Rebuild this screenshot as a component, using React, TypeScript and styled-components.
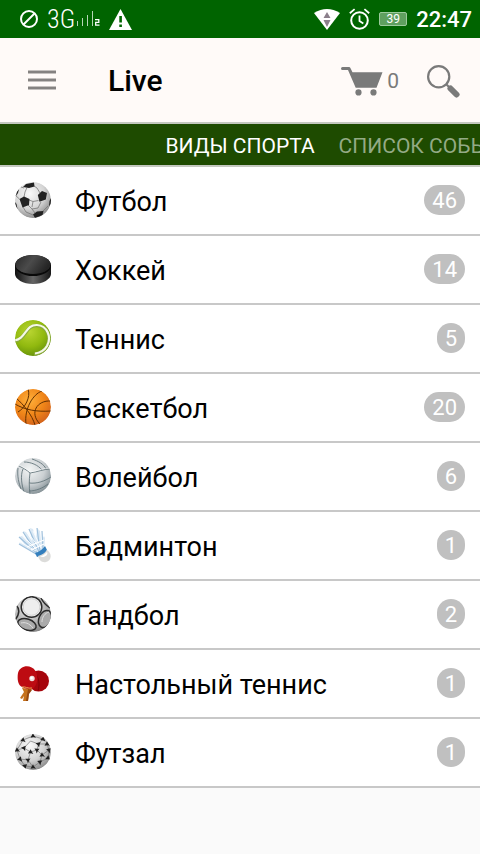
import React from 'react';
import styled, { createGlobalStyle } from 'styled-components';

const GlobalStyle = createGlobalStyle`
  * { box-sizing: border-box; }
  html, body { margin: 0; min-height: 100%; background: #fafafa; }
  body { font-family: Roboto, "Noto Sans", sans-serif; color: #000; }
  button { border: 0; padding: 0; background: none; color: inherit; font: inherit; cursor: pointer; }
  svg { display: block; flex: none; }
`;

const StatusBar = styled.div`
  display: flex;
  justify-content: space-between;
  height: 38px;
  padding: 0 8px 0 20px;
  background: #006400;
  color: #fff;
`;

const StatusGroup = styled.div<{ $gap: number }>`
  display: flex;
  align-items: center;
  gap: ${(p) => p.$gap}px;
`;

const Network = styled.span`
  display: flex;
  align-items: center;
  font-family: "Roboto Condensed", Roboto, sans-serif;
  font-size: 26px;
  font-weight: 300;
  line-height: 36px;
`;

const Battery = styled.span`
  width: 28px;
  height: 14px;
  border: 1px solid #9cca9c;
  border-radius: 2px;
  background: #5fa05f;
  font-size: 12px;
  line-height: 12px;
  text-align: center;
`;

const Clock = styled.time`
  font-size: 22px;
  line-height: 36px;
  padding-top: 2px;
  font-weight: 500;
`;

const Header = styled.header`
  display: flex;
  align-items: center;
  height: 86px;
  padding: 2px 20px 0 28px;
  border-bottom: 2px solid #c4c8c0;
  background: #fffaf8;
`;

const Title = styled.h1`
  flex: 1;
  margin: 0 0 0 52px;
  font-size: 30px;
  line-height: 36px;
  font-weight: 500;
`;

const CartButton = styled.button`
  display: flex;
  align-items: center;
  gap: 4px;
  margin-right: 28px;
  color: #7a7a7a;
  font-size: 21px;
  line-height: 28px;
`;

const Tabs = styled.nav`
  display: grid;
  grid-template-columns: 1fr auto 1fr;
  column-gap: 24px;
  height: 43px;
  overflow: hidden;
  border-bottom: 2px solid #c4c8c0;
  background: #1e4b00;
`;

const Tab = styled.button<{ $active?: boolean }>`
  grid-column: ${(p) => (p.$active ? 2 : 3)};
  min-width: 0;
  padding-top: 3px;
  color: ${(p) => (p.$active ? '#fff' : '#93aa85')};
  font-size: 21px;
  line-height: 36px;
  text-align: left;
  white-space: nowrap;
`;

const List = styled.ul`
  margin: 0;
  padding: 0;
  list-style: none;
`;

const Item = styled.li`
  border-bottom: 2px solid #c8c8c8;
  background: #fff;
`;

const SportRow = styled.button`
  display: flex;
  align-items: center;
  width: 100%;
  height: 67px;
  padding: 0 15px 2px;
  text-align: left;
`;

const SportName = styled.span`
  flex: 1;
  margin-left: 24px;
  padding-top: 4px;
  font-size: 27px;
  line-height: 32px;
`;

const Count = styled.span`
  min-width: 28px;
  height: 30px;
  padding: 1px 8px 0;
  border-radius: 15px;
  background: #c0c0c0;
  color: #fff;
  font-size: 22px;
  line-height: 30px;
  text-align: center;
`;

const BlockedIcon = () => (
  <svg width="18" height="18" viewBox="0 0 18 18" fill="none" stroke="#fff" strokeWidth="2">
    <circle cx="9" cy="9" r="8" />
    <path d="M3.5 14.5l11-11" />
  </svg>
);

const SignalIcon = () => (
  <svg width="25" height="16" viewBox="0 0 25 16">
    <path d="M2.500 10v5M7.500 7v8M12.500 4v11M17.500 0v15" stroke="#b5d5b5" fill="none" />
    <path d="M20 8.700h3.800v2.600H20.700v2.900h3.800" stroke="#fff" strokeWidth="1.300" fill="none" />
  </svg>
);

const WarningIcon = () => (
  <svg width="23" height="21" viewBox="0 0 23 21">
    <path d="M11.5 0L23 21H0z" fill="#fff" />
    <path d="M10.3 7h2.6v6.500h-2.600zM10.300 15.500h2.600v2.600h-2.600z" fill="#006400" />
  </svg>
);

const WifiIcon = () => (
  <svg width="26" height="21" viewBox="0 0 26 21">
    <path d="M0 4Q13-4 26 4L13 21z" fill="#fff" />
    <path d="M13 3l3.500 6h-7zM9.500 11h7L13 18z" fill="#8b7f8b" />
  </svg>
);

const AlarmIcon = () => (
  <svg width="21" height="22" viewBox="0 0 21 22" fill="none" stroke="#fff" strokeWidth="2">
    <circle cx="10.500" cy="12.500" r="8.300" />
    <path d="M10.500 7.500v5.500l3.800 2.500M.8 5.200L5.600 1.100M20.200 5.200L15.400 1.100" strokeWidth="1.800" />
  </svg>
);

const MenuIcon = () => (
  <svg width="28" height="22" viewBox="0 0 28 22">
    <path d="M0 0h28v4H0zM0 8h28v4H0zM0 16h28v4H0z" fill="#c4c0be" />
    <path d="M0 1h28v2H0zM0 9h28v2H0zM0 17h28v2H0z" fill="#858281" />
  </svg>
);

const CartIcon = () => (
  <svg width="42" height="29" viewBox="0 0 42 29" fill="#7a7a7a">
    <path d="M0 1.500Q0 0 1.500 0H8q1 0 1.400 1L11.500 5.300H41.500L35.500 20.800H14.700L7 3H1.500Q0 3 0 1.500z" />
    <circle cx="17.500" cy="25.400" r="3.100" />
    <circle cx="32.500" cy="25.400" r="3.100" />
  </svg>
);

const SearchIcon = () => (
  <svg width="33" height="33" viewBox="0 0 33 33" fill="none" stroke="#7a7a7a">
    <circle cx="11.700" cy="11.700" r="10.600" strokeWidth="2.200" />
    <path d="M19 19l4 4" strokeWidth="2.200" />
    <path d="M23.500 23.500l6 6" strokeWidth="6" strokeLinecap="round" />
  </svg>
);

const Icon = ({ children }: { children: React.ReactNode }) => (
  <svg width="36" height="36" viewBox="0 0 36 36" aria-hidden="true">{children}</svg>
);

const Ball = ({ id, stops, children }: { id: string; stops: string[]; children: React.ReactNode }) => (
  <Icon>
    <defs>
      <radialGradient id={id} cx=".4" cy=".32" r=".7">
        <stop offset="0" stopColor={stops[0]} />
        <stop offset=".6" stopColor={stops[1]} />
        <stop offset="1" stopColor={stops[2]} />
      </radialGradient>
      <clipPath id={`${id}-clip`}><circle cx="18" cy="18" r="18" /></clipPath>
    </defs>
    <g clipPath={`url(#${id}-clip)`}>
      <circle cx="18" cy="18" r="18" fill={`url(#${id})`} />
      {children}
    </g>
  </Icon>
);

const Football = () => (
  <Ball id="football" stops={['#fafafa', '#d5d5d5', '#8c8c8c']}>
    <path d="M12 5.500L10 10l-1 5M19 4l3 2 3 5M14 18l4 1.500 5.500-1M18 19.500L17 25M13 23l4 4 6-1L26 20M17 27l3 4M8 25l3 5 7 3M0 13l4.500 4M6 5l3 1M27 30l6-6" fill="none" stroke="#777" strokeWidth=".8" />
    <path d="M8 5l3-3 8-1.500.5 4-5.500 1.500zM4.500 17L9 14.500l5.500 2.500-.5 6-6.500 2.500zM22.800 13L27 9l5 2-1.200 6.500-6.300 2.300zM18 32.500l4-3 6.500-.5-1 4-7.500 3zM1.500 10L4 7l-1 4-2 3zM34.500 19L36 16v6l-2 2zM0 20l1.500 2 1 5-3-4z" fill="#222" />
  </Ball>
);

const Puck = () => (
  <Icon>
    <defs>
      <linearGradient id="puck-side">
        <stop stopColor="#111" /><stop offset=".5" stopColor="#666" /><stop offset="1" stopColor="#171717" />
      </linearGradient>
      <linearGradient id="puck-top" x1="0" y1="0" x2="1" y2=".4">
        <stop stopColor="#282828" /><stop offset=".5" stopColor="#4b4b4b" /><stop offset="1" stopColor="#252525" />
      </linearGradient>
    </defs>
    <path d="M0 14v9c0 5 8 10 18 10s18-5 18-10v-9z" fill="url(#puck-side)" />
    <ellipse cx="18" cy="14.500" rx="18" ry="10.500" fill="#090909" />
    <ellipse cx="18" cy="13.500" rx="17.500" ry="9.500" fill="url(#puck-top)" />
  </Icon>
);

const TennisBall = () => (
  <Ball id="tennis" stops={['#b9d531', '#91b90f', '#67930a']}>
    <path d="M-1 21C11 20 10 5 22 5.500c10 .5 15 12 10 21-3 5-9 7.500-13 8" fill="none" stroke="#88a83c" strokeWidth="3.600" />
    <path d="M-1 20.500C11 19.500 10 4.500 22 5c10 .5 15 12 10 21-3 5-8 7-12 7.500" fill="none" stroke="#f5f8e7" strokeWidth="2.200" />
  </Ball>
);

const Basketball = () => (
  <Ball id="basketball" stops={['#ffb03a', '#ef8418', '#d4641c']}>
    <path d="M13 0c3 8-3 19-10 23M27 2C18 5 9 20 11 35M36 12c-14-1-22 12-11 23M0 15c10 6 22 8 36 7M1 9c8 7 16 17 19 27" fill="none" stroke="#633000" strokeWidth="1" />
  </Ball>
);

const Volleyball = () => (
  <Ball id="volleyball" stops={['#f3f5f5', '#cbd0d3', '#879398']}>
    <path d="M4 8c4 2 8 4 11 7 7-1 14-4 20-4M15 15c-1 7-1 14 0 21M9 4c7 0 14 3 18 8M17 1c6 2 12 5 14 10M3 10c-1 8 1 16 3 21M8 11c-3 7-1 17 1 23M14 25c8 1 16-2 22-6M14 33c7 0 14-3 19-7" fill="none" stroke="#64767c" strokeWidth=".9" />
    <path d="M4 7c4 2 8 4 11 7 7-1 14-4 20-4" fill="none" stroke="#fff" strokeWidth=".6" />
  </Ball>
);

const Shuttlecock = () => (
  <Icon>
    <path d="M21 27L4 17l1-2 5 3-6-8 3-1 6 6-5-11 3 1 6 9-2-13 3 1 3 10 1-11 3 3 1 10 3-5 1 2-1 13z" fill="#dbe9f5" />
    <path d="M21 27L4 17M23 27L4 10M22 26L8 5M24 25L14 2M25 24L22 1M28 22L27 4" fill="none" stroke="#9fc0dc" strokeWidth="1.200" />
    <path d="M5 15l16 9M7 8l14 14M12 5l12 15M18 4l8 17" fill="none" stroke="#f8fcff" />
    <path d="M12 20l17-7M16 23l13-6" fill="none" stroke="#fff" strokeWidth="1.200" />
    <path d="M20 26c4-1 8-4 10-7l2 4c-2 4-6 6-10 7z" fill="#347fbd" />
    <path d="M23 29c4-1 7-3 9-6 6 4 4 11-1 12-4 1-7-2-8-6z" fill="#dcdcda" />
    <path d="M25 29c3 0 5-2 7-4 2 3-4 7-7 4z" fill="#fff" />
  </Icon>
);

const Handball = () => (
  <Ball id="handball" stops={['#eee', '#b8b8b8', '#858585']}>
    <g fill="#aaa" stroke="#2b2b2b" strokeWidth="1.500">
      <circle cx="16.500" cy="11" r="10.300" fill="#eee" />
      <ellipse cx="12" cy="28.500" rx="9.500" ry="5.500" transform="rotate(18 12 28.500)" />
      <ellipse cx="30" cy="23" rx="6" ry="9" transform="rotate(24 30 23)" />
      <path d="M1 9Q7 15 0 24M26 2q3 6 9 10" fill="none" />
    </g>
    <circle cx="16.500" cy="11" r="8.300" fill="none" stroke="#c8c8c8" strokeWidth=".7" />
    <path d="M6 27c4-1 8 0 12 5M27 26c0-5 3-9 7-10" fill="none" stroke="#ddd" />
  </Ball>
);

const TableTennis = () => (
  <Icon>
    <circle cx="23.500" cy="16" r="10.500" fill="#a6050c" />
    <path d="M20 8c4 5 5 11 3 18" fill="none" stroke="#850007" />
    <path d="M7 23l10 1-3 4-1 8H8l1-5-2 3-2-1 4-6z" fill="#c5711b" />
    <path d="M13 24l4 1-3 4-1 7h-2z" fill="#95480e" />
    <path d="M3 8C5 0 16-1 20.500 6c4 7 1 16-3.500 18-3 1-7-1-10-2-4-2-5-8-4-14z" fill="#bd0b12" />
    <path d="M7 22c3-1 6 2 10 1" fill="none" stroke="#e9a14d" />
    <circle cx="17" cy="13.500" r="2.700" fill="#f0dfdc" />
    <circle cx="16.500" cy="13" r="1.300" fill="#fff" />
  </Icon>
);

const futsalPatches = [
  [8, 6, 10], [18, 2, 0], [28, 5, 15], [23.500, 10, 50], [32, 10, 0], [9, 14, 40], [2, 16, 0], [15.500, 18, 5],
  [22, 16, 65], [34, 16, 50], [27, 21, 0], [5, 25, 20], [13, 26, 60], [25, 28, 55], [33, 24, 10], [18, 33, 0], [10, 32, 50],
];

const FutsalBall = () => (
  <Ball id="futsal" stops={['#fafafa', '#d2d2d2', '#8d8d8d']}>
    <path d="M8 6l10-4 10 3-4.500 5-8-3L9 14 2 16 8 6M23.500 10H32M23.500 10L22 16l-6.500 2L9 14M22 16l5 5 7-5-2-6M15.500 18L13 26 5 25 2 16M27 21l-2 7-7 5-5-7M25 28l8-4 1-8M5 25l5 7 8 1" fill="none" stroke="#777" strokeWidth=".7" />
    {futsalPatches.map(([x, y, angle]) => (
      <path key={`${x}-${y}`} d="M0-2.800l1 2 2 2.600L.5 1.300l-3 .4L-1-1z" transform={`translate(${x} ${y}) rotate(${angle})`} fill="#1f1f1f" />
    ))}
  </Ball>
);

const sports = [
  { name: 'Футбол', count: 46, Drawing: Football },
  { name: 'Хоккей', count: 14, Drawing: Puck },
  { name: 'Теннис', count: 5, Drawing: TennisBall },
  { name: 'Баскетбол', count: 20, Drawing: Basketball },
  { name: 'Волейбол', count: 6, Drawing: Volleyball },
  { name: 'Бадминтон', count: 1, Drawing: Shuttlecock },
  { name: 'Гандбол', count: 2, Drawing: Handball },
  { name: 'Настольный теннис', count: 1, Drawing: TableTennis },
  { name: 'Футзал', count: 1, Drawing: FutsalBall },
];

export default function App() {
  return (
    <>
      <GlobalStyle />
      <StatusBar>
        <StatusGroup $gap={9}>
          <BlockedIcon />
          <Network>3G<SignalIcon /></Network>
          <WarningIcon />
        </StatusGroup>
        <StatusGroup $gap={9}>
          <WifiIcon />
          <AlarmIcon />
          <Battery>39</Battery>
          <Clock>22:47</Clock>
        </StatusGroup>
      </StatusBar>
      <Header>
        <button type="button" aria-label="Меню"><MenuIcon /></button>
        <Title>Live</Title>
        <CartButton type="button" aria-label="Корзина"><CartIcon />0</CartButton>
        <button type="button" aria-label="Поиск"><SearchIcon /></button>
      </Header>
      <Tabs>
        <Tab type="button" $active>ВИДЫ СПОРТА</Tab>
        <Tab type="button">СПИСОК СОБЫТИЙ</Tab>
      </Tabs>
      <main>
        <List>
          {sports.map(({ name, count, Drawing }) => (
            <Item key={name}>
              <SportRow type="button">
                <Drawing />
                <SportName>{name}</SportName>
                <Count>{count}</Count>
              </SportRow>
            </Item>
          ))}
        </List>
      </main>
    </>
  );
}
